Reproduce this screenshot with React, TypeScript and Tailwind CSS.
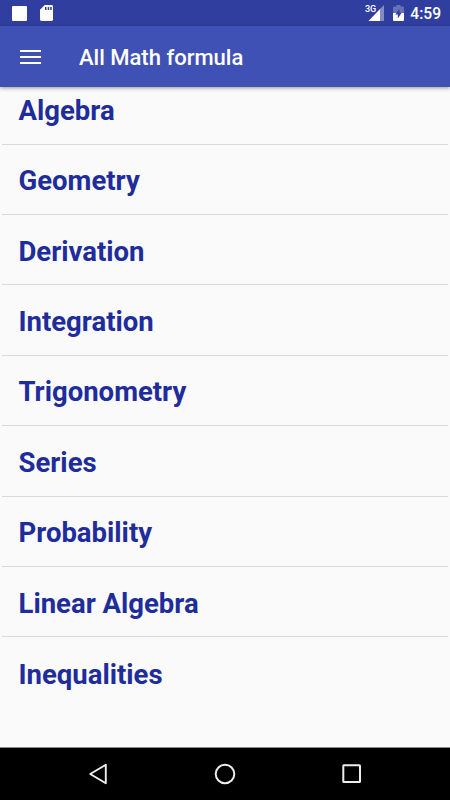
import React from "react";

const topics = [
  "Algebra",
  "Geometry",
  "Derivation",
  "Integration",
  "Trigonometry",
  "Series",
  "Probability",
  "Linear Algebra",
  "Inequalities",
];

const StatusBar = () => {
  return (
    <div className="h-[26px] shrink-0 bg-[#303f9f] flex items-center justify-between pl-3 pr-[9px] text-white">
      <div className="flex items-center gap-[12.5px]">
        <div className="w-[15px] h-[15px] rounded-[1px] bg-white" />
        <svg width="13" height="16" viewBox="0 0 13 16">
          <path
            d="M4.8 0H11.6Q13 0 13 1.4V14.6Q13 16 11.6 16H1.4Q0 16 0 14.6V4.8Z"
            fill="#fff"
          />
          <path d="M5 2h1.5v3H5zM7.7 2h1.5v3H7.7zM10.2 2h1.5v3h-1.5z" fill="#303f9f" />
        </svg>
      </div>
      <div className="flex items-center">
        <div className="relative w-5 h-4">
          <span className="absolute left-0 -top-px text-[9px] leading-[10px] font-medium">
            3G
          </span>
          <svg width="20" height="16" viewBox="0 0 20 16">
            <path d="M19 0V16H15V4Z" fill="#838cc5" />
            <path d="M15 4V16H3.5Z" fill="#fff" />
          </svg>
        </div>
        <svg className="ml-2" width="11" height="16" viewBox="0 0 11 16">
          <path
            d="M3.3 0H7.6V1.6H10Q11 1.6 11 2.6V8H0V2.6Q0 1.6 1 1.6H3.3Z"
            fill="#6771b7"
          />
          <path d="M0 8H11V15Q11 16 10 16H1Q0 16 0 15Z" fill="#fff" />
          <path d="M6.5 3.8L2.4 9.4H4.8V13.4L8.7 7.8H6.5Z" fill="#303f9f" />
        </svg>
        <span className="ml-[6.4px] pt-[2px] text-[15.6px] leading-5 font-medium">4:59</span>
      </div>
    </div>
  );
};

const Toolbar = () => {
  return (
    <header className="relative z-10 h-[61px] shrink-0 bg-[#3f51b5] flex items-center pl-5 shadow-[0_1px_4px_rgba(0,0,0,0.4)]">
      <div className="flex flex-col gap-[4px]">
        <div className="w-[21px] h-[2px] bg-white" />
        <div className="w-[21px] h-[2px] bg-white" />
        <div className="w-[21px] h-[2px] bg-white" />
      </div>
      <h1 className="ml-[38px] pt-[2px] text-[22px] leading-7 font-medium text-white">
        All Math formula
      </h1>
    </header>
  );
};

const NavigationBar = () => {
  return (
    <nav className="h-[53px] shrink-0 bg-black border-t border-[#8c8c8c] flex items-center pl-[88px]">
      <svg width="20" height="22" viewBox="0 0 20 22" fill="none" stroke="#eee">
        <path d="M17.8 1.7V20.3L2.2 11Z" strokeWidth="1.9" strokeLinejoin="round" />
      </svg>
      <svg className="ml-[106px]" width="22" height="22" viewBox="0 0 22 22" fill="none" stroke="#eee">
        <circle cx="11" cy="11" r="9.3" strokeWidth="2" />
      </svg>
      <svg className="ml-[106px]" width="20" height="20" viewBox="0 0 20 20" fill="none" stroke="#eee">
        <rect x="1.3" y="1.3" width="16.7" height="16.7" rx="0.6" strokeWidth="2" />
      </svg>
    </nav>
  );
};

const App = () => {
  return (
    <div className="h-screen flex flex-col overflow-hidden bg-[#fafafa] font-['Roboto',sans-serif]">
      <StatusBar />
      <Toolbar />
      <main className="flex-1 min-h-0 overflow-hidden px-[2px]">
        <ul className="-mt-[12.8px]">
          {topics.map((topic) => (
            <li
              key={topic}
              className="h-[70.4px] flex items-center pl-[16.5px] pt-[4px] border-b border-[#dadada] last:border-b-0 text-[27.5px] leading-8 font-bold text-[#1e2d9b]"
            >
              {topic}
            </li>
          ))}
        </ul>
      </main>
      <NavigationBar />
    </div>
  );
};

export default App;
